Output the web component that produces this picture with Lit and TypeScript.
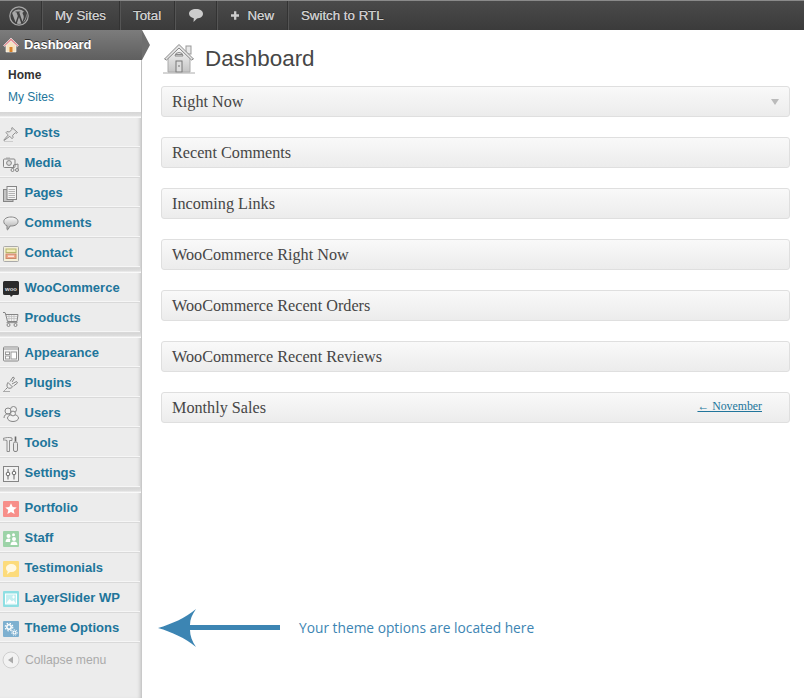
import { LitElement, html, css, svg } from "lit";
import { customElement } from "lit/decorators.js";

const stroke = "#858585";

// sidebar icons, all on a 16x16 box
const icons: Record<string, unknown> = {
  posts: svg`<path d="M9 1.500l5.500 5-1.200.8-1-.6-2.600 2.600.3 2.400-1 1-2.200-2.400L1 14.500l-.3-.3 4.600-5.300-2.400-2.300 1-1 2.500.4 2.600-2.700-.5-1z" fill="#e8e8e8" stroke="${stroke}" stroke-width=".9"/><path d="M1 15.500h9" stroke="#ccc"/>`,
  media: svg`<rect x=".5" y="3" width="11.500" height="8.500" rx="1" fill="#f0f0f0" stroke="${stroke}"/><rect x="3" y="1.500" width="4" height="1.500" fill="#aaa"/><circle cx="6" cy="7" r="2.400" fill="#ddd" stroke="${stroke}"/><path d="M10.500 12.500V9l4.500-1v5.500" fill="none" stroke="${stroke}"/><circle cx="9.500" cy="14" r="1.500" fill="#eee" stroke="${stroke}"/><circle cx="14" cy="14" r="1.500" fill="#eee" stroke="${stroke}"/>`,
  pages: svg`<rect x=".5" y="3.500" width="9.500" height="12" fill="#c4c4c4" stroke="${stroke}"/><rect x="4" y=".5" width="9.500" height="13" fill="#f4f4f4" stroke="${stroke}"/><path d="M5.500 3.500h6.500M5.500 5.500h6.500M5.500 7.500h6.500M5.500 9.500h6.500M5.500 11.500h6.500" stroke="#b4b4b4"/>`,
  comments: svg`<defs><linearGradient id="cb" x1="0" y1="0" x2="0" y2="1"><stop offset="0" stop-color="#fafafa"/><stop offset="1" stop-color="#a8a8a8"/></linearGradient></defs><path d="M8 1c4 0 7 1.800 7 4.500S12 10 8.500 10H7l-2 3.500c-.3.400-1 .3-1-.3V9.700C2 9 .8 7.500.8 5.500.8 2.800 4 1 8 1z" fill="url(#cb)" stroke="${stroke}"/>`,
  contact: svg`<rect x=".5" y=".5" width="15" height="15" rx="1" fill="#f4efd8" stroke="#aaa"/><rect x="3" y="3" width="10" height="3.500" fill="#f3edb8" stroke="#b5b56a"/><rect x="3" y="8" width="10" height="4.500" fill="#f0a58a" stroke="#c98a6a"/><path d="M5 10.200h6" stroke="#fff"/>`,
  products: svg`<path d="M0 1.500h2l.8 2h12.200l-1 7H4.500L2.500 2.500" fill="#f0f0f0" stroke="${stroke}"/><path d="M4 5.500h10M4 7.500h10M6 4v6M8.500 4v6M11 4v6" stroke="#bbb" stroke-width=".7"/><rect x="3.500" y="11" width="11" height="1.200" fill="#999"/><circle cx="5.500" cy="14" r="1.500" fill="#eee" stroke="${stroke}"/><circle cx="12.500" cy="14" r="1.500" fill="#eee" stroke="${stroke}"/>`,
  appearance: svg`<rect x=".5" y="1" width="15" height="14" rx="1" fill="#f4f4f4" stroke="${stroke}"/><rect x="1" y="1.500" width="14" height="2.500" fill="#c4c4c4"/><rect x="2.500" y="6" width="4" height="2.500" fill="#fff" stroke="#999"/><rect x="2.500" y="10" width="4" height="3" fill="#fff" stroke="#999"/><rect x="8" y="6" width="5.500" height="7" fill="#fff" stroke="#999"/>`,
  plugins: svg`<path d="M5 6.500l4.500 4.500c-1.500 1.500-3.500 1.700-5 .5l-1.500 1.500M5 6.500c-1.200 1.700-1.300 3.300-.5 5" fill="#eee" stroke="${stroke}"/><path d="M7 5.500l3-4.500 1.500 1-2.500 4M9 8l4.500-2.500 1 1.500-4 3" fill="#f4f4f4" stroke="${stroke}"/><path d="M3 13l-2.500 2.500M0 15.500h7" stroke="#aaa"/>`,
  users: svg`<circle cx="5" cy="5" r="3" fill="#f0f0f0" stroke="${stroke}"/><circle cx="10.500" cy="3.500" r="3" fill="#f0f0f0" stroke="${stroke}"/><path d="M1 12c0-3 2-4 4-4 1 0 1.500.3 2 .7" fill="#eee" stroke="${stroke}"/><ellipse cx="10" cy="12" rx="5.500" ry="3.500" fill="#f2f2f2" stroke="${stroke}"/><circle cx="10" cy="7.500" r="2.400" fill="#f2f2f2" stroke="${stroke}"/>`,
  tools: svg`<path d="M0 2.500C3 1.500 6 1 9 2v2.500H6.500V15.500h-2.500V4.500C2.500 4 1 3.800 0 4z" fill="#ececec" stroke="${stroke}" stroke-width=".9"/><path d="M12.500.5v5" stroke="#666" stroke-width="1.600"/><rect x="10.500" y="6" width="4" height="9.500" rx="1.500" fill="#e8e8e8" stroke="${stroke}"/>`,
  settings: svg`<rect x=".5" y=".5" width="15" height="15" fill="#f2f2f2" stroke="${stroke}"/><path d="M5 3v3M5 10v3.500M11 3v2M11 9v4.500" stroke="#666"/><circle cx="5" cy="8" r="1.800" fill="#fff" stroke="#666"/><circle cx="11" cy="7" r="1.800" fill="#fff" stroke="#666"/>`,
  portfolio: svg`<rect width="16" height="16" rx="1" fill="#f78f8a"/><path d="M8 2.300l1.700 3.700 4 .4-3 2.700.9 4L8 11.100l-3.600 2 .9-4-3-2.700 4-.4z" fill="#fff"/>`,
  staff: svg`<rect width="16" height="16" rx="1" fill="#9dd3a8"/><circle cx="5.500" cy="5" r="2" fill="#fff"/><circle cx="10.500" cy="3.700" r="1.500" fill="#fff"/><circle cx="11" cy="8" r="2" fill="#fff"/><path d="M2.500 11c0-2.500 1.500-3.500 3-3.500 1 0 1.500.4 2 1-.6 1-.6 2-.3 2.500zM7.500 14c0-2.500 1.500-3.500 3.500-3.500s3.500 1 3.500 3.500z" fill="#fff"/>`,
  testimonials: svg`<rect width="16" height="16" rx="1" fill="#fcdb7c"/><path d="M8.500 3c3 0 5 1.700 5 4s-2 4-5 4H7l-3 2.500.7-3.300C3.300 9.500 3 8.300 3 7c0-2.300 2.500-4 5.500-4z" fill="#fff8e2"/>`,
  layerslider: svg`<rect width="16" height="16" rx="1" fill="#8fdfe3"/><rect x="2.500" y="3" width="11" height="10" fill="#c4eff1" stroke="#fff"/><path d="M3 12.500l3.500-4.500 2.500 2.500 1.500-1.500 2.500 3.500z" fill="#fff"/><path d="M10.500 4.500v3M9 6h3" stroke="#fff"/>`,
  theme: svg`<rect width="16" height="16" rx="1" fill="#7eb0d0"/><circle cx="6" cy="6" r="2.200" fill="none" stroke="#fff" stroke-width="1.500"/><circle cx="6" cy="6" r="3.800" fill="none" stroke="#fff" stroke-width="1.200" stroke-dasharray="1.500 1.500"/><circle cx="11.500" cy="11.500" r="1.500" fill="none" stroke="#fff" stroke-width="1.200"/><circle cx="11.500" cy="11.500" r="2.800" fill="none" stroke="#fff" stroke-width="1" stroke-dasharray="1.200 1.200"/>`,
};

const groups = [
  [["posts", "Posts"], ["media", "Media"], ["pages", "Pages"], ["comments", "Comments"], ["contact", "Contact"]],
  [["woo", "WooCommerce"], ["products", "Products"]],
  [["appearance", "Appearance"], ["plugins", "Plugins"], ["users", "Users"], ["tools", "Tools"], ["settings", "Settings"]],
  [["portfolio", "Portfolio"], ["staff", "Staff"], ["testimonials", "Testimonials"], ["layerslider", "LayerSlider WP"], ["theme", "Theme Options"]],
];

const widgets = [
  "Right Now",
  "Recent Comments",
  "Incoming Links",
  "WooCommerce Right Now",
  "WooCommerce Recent Orders",
  "WooCommerce Recent Reviews",
  "Monthly Sales",
];

@customElement("app-root")
export class AppRoot extends LitElement {
  static styles = css`
    :host {
      display: block;
      width: 804px;
      height: 698px;
      overflow: hidden;
      background: #fff;
      font-family: "Liberation Sans", Arial, sans-serif;
    }
    .topbar {
      display: flex;
      height: 30px;
      box-sizing: border-box;
      border-top: 1px solid #8a8a8a;
      background: linear-gradient(#4a4a4a, #3b3b3b);
      color: #ccc;
      font-size: 13.3px;
      text-shadow: 0 0 0.6px #ccc, 0 -1px 0 #2a2a2a;
    }
    .topbar > div {
      display: flex;
      align-items: center;
      gap: 8px;
      padding: 0 13px;
      border-right: 1px solid #333;
      box-shadow: 1px 0 0 #555;
      white-space: nowrap;
    }
    .topbar > div:last-child {
      border: 0;
      box-shadow: none;
    }
    .topbar .logo {
      width: 42px;
      box-sizing: border-box;
      padding: 0 0 0 9px;
    }
    .topbar .bubble {
      width: 42px;
      box-sizing: border-box;
      padding: 0 0 0 13px;
    }
    .topbar .mysites {
      width: 78px;
      box-sizing: border-box;
    }
    .topbar .total {
      width: 55px;
      box-sizing: border-box;
    }
    .topbar .new {
      width: 71px;
      box-sizing: border-box;
      padding-left: 14px;
    }
    .layout {
      display: flex;
    }
    .sidebar {
      flex: 0 0 142px;
      height: 668px;
      background: #ececec;
      box-shadow: inset -4px 0 4px -3px rgba(0, 0, 0, 0.25);
    }
    .current {
      position: relative;
      display: flex;
      align-items: center;
      gap: 5px;
      height: 30px;
      box-sizing: border-box;
      padding: 0 0 1px 3px;
      background: linear-gradient(#7c7c7c, #5f5f5f);
      color: #fff;
      font-size: 13px;
      font-weight: bold;
      letter-spacing: -0.05px;
      text-shadow: 0 -1px 0 rgba(0, 0, 0, 0.6);
    }
    .current::after {
      content: "";
      position: absolute;
      left: 142px;
      top: 0;
      border-left: 8px solid #6e6e6e;
      border-top: 15px solid transparent;
      border-bottom: 15px solid transparent;
    }
    .sub {
      height: 52px;
      box-sizing: border-box;
      padding: 4px 0 0 8px;
      background: #fff;
      margin-right: 1px;
      font-size: 12px;
      line-height: 22px;
      color: #21759b;
      box-shadow: 0 1px 2px rgba(0, 0, 0, 0.15);
    }
    .sub .here {
      font-weight: bold;
      color: #333;
    }
    .sep {
      height: 5px;
      margin-right: 1px;
      box-sizing: border-box;
      background: linear-gradient(#d6d6d6 0, #dedede 60%, #f4f4f4 80%, #ffffff 100%);
    }
    .sep.top {
      height: 6px;
    }
    .item {
      display: flex;
      align-items: center;
      gap: 5px;
      height: 30px;
      box-sizing: border-box;
      padding: 0 0 0 3px;
      border-bottom: 1px solid #d9d9d9;
      margin-right: 2px;
      box-shadow: inset 0 -1px 0 #f6f6f6;
      color: #21759b;
      font-size: 13px;
      font-weight: bold;
    }
    .item svg {
      flex: none;
      width: 16px;
      height: 16px;
      margin-top: 2px;
    }
    .item > span {
      margin-left: 0.5px;
    }
    .collapse {
      display: flex;
      align-items: center;
      gap: 5px;
      height: 34px;
      padding-left: 2px;
      color: #aaa;
      font-size: 12.2px;
    }
    .main {
      flex: 1;
      padding: 0 14px 0 19px;
    }
    .title {
      display: flex;
      align-items: center;
      gap: 10px;
      height: 56px;
      padding-left: 2px;
      font-size: 22.4px;
      color: #464646;
    }
    .title span {
      padding-top: 2px;
    }
    .widget {
      display: flex;
      align-items: center;
      justify-content: space-between;
      height: 31px;
      box-sizing: border-box;
      margin-bottom: 20px;
      padding: 1px 10px 0;
      border: 1px solid #dfdfdf;
      border-radius: 3px;
      background: linear-gradient(#f9f9f9, #ececec);
      font-family: "Liberation Serif", "DejaVu Serif", serif;
      font-size: 16.2px;
      color: #464646;
    }
    .widget a {
      margin: 0 17px 3px 0;
      font-size: 11.8px;
      color: #21759b;
      text-decoration: underline;
    }
    .widget i {
      border-top: 6px solid #bbb;
      border-left: 4px solid transparent;
      border-right: 4px solid transparent;
    }
    .note {
      display: flex;
      align-items: center;
      gap: 19px;
      margin-top: 186px;
      margin-left: -3px;
      font-family: "Open Sans", sans-serif;
      font-size: 13.75px;
      color: #3c85b3;
    }
    .note span {
      padding-bottom: 2px;
    }
  `;

  private wooIcon() {
    return html`<svg viewBox="0 0 16 16">
      <path d="M1.500 0h13A1.500 1.500 0 0 1 16 1.500v11a1.500 1.500 0 0 1-1.500 1.500H10l-2 2-1-2H1.500A1.500 1.500 0 0 1 0 12.500v-11A1.500 1.500 0 0 1 1.500 0z" fill="#2b2b2b"/>
      <text x="8" y="9.500" text-anchor="middle" font-size="6" font-weight="bold" fill="#ddd" font-family="Liberation Sans">woo</text>
    </svg>`;
  }

  private renderItem(key: string, label: string) {
    return html`<div class="item">
      ${key === "woo" ? this.wooIcon() : html`<svg viewBox="0 0 16 16">${icons[key]}</svg>`}
      <span>${label}</span>
    </div>`;
  }

  render() {
    return html`
      <div class="topbar">
        <div class="logo">
          <svg width="20" height="20" viewBox="0 0 20 20">
            <circle cx="10" cy="10" r="9.200" fill="none" stroke="#a8a8a8" stroke-width="1.200"/>
            <path d="M3.200 7.200l3.400 9.300L8.800 10 7.500 6.300h-1V5.500h4.800v.8h-1.100l3.300 9.500 1-3.300c.5-1.700.2-3-.6-4.300-.6-1-.4-2.200 1.200-2.500A7.900 7.900 0 0 0 3.600 6.300zM10 11l-2.200 6.600a8 8 0 0 0 4.600-.1zM16.800 6.500c.6 2.400.2 4.300-.8 6.800l-2.200 3.400a8 8 0 0 0 3-10.200z" fill="#a8a8a8"/>
          </svg>
        </div>
        <div class="mysites">My Sites</div>
        <div class="total">Total</div>
        <div class="bubble">
          <svg width="16" height="15" viewBox="0 0 16 15">
            <path d="M8 1c4 0 7 2 7 4.800s-3 4.700-6 4.700L5.500 14l.3-3.800C3 9.600 1 8 1 5.800 1 3 4 1 8 1z" fill="#ccc"/>
          </svg>
        </div>
        <div class="new">
          <svg width="11" height="11" viewBox="0 0 11 11"><path d="M4 0h3v4h4v3H7v4H4V7H0V4h4z" fill="#ccc"/></svg>
          <span>New</span>
        </div>
        <div>Switch to RTL</div>
      </div>
      <div class="layout">
        <div class="sidebar">
          <div class="current">
            <svg width="16" height="16" viewBox="0 0 16 16">
              <path d="M3 8.500L8 4l5 4.500V15H3z" fill="#f6e3c0" stroke="#fff" stroke-width=".6"/>
              <path d="M8 1L.5 8.500l1.200 1L8 3.800l6.300 5.700 1.200-1z" fill="#e58a8f" stroke="#fff" stroke-width=".6"/>
              <rect x="6.500" y="10" width="3" height="5" fill="#d9822b"/>
            </svg>
            <span>Dashboard</span>
          </div>
          <div class="sub">
            <div class="here">Home</div>
            <div>My Sites</div>
          </div>
          <div class="sep top"></div>
          ${groups.map(
            (group, i) => html`
              ${group.map(([key, label]) => this.renderItem(key, label))}
              ${i < groups.length - 1 ? html`<div class="sep"></div>` : ""}
            `
          )}
          <div class="collapse">
            <svg width="18" height="18" viewBox="0 0 18 18">
              <circle cx="9" cy="9" r="8" fill="#f2f2f2" stroke="#cfcfcf"/>
              <path d="M11 5.500v7L6 9z" fill="#aaa"/>
            </svg>
            <span>Collapse menu</span>
          </div>
        </div>
        <div class="main">
          <div class="title">
            <svg width="32" height="32" viewBox="0 0 32 32">
              <defs>
                <linearGradient id="wall" x1="0" y1="0" x2="0" y2="1">
                  <stop offset="0" stop-color="#f6f6f6"/>
                  <stop offset="1" stop-color="#c4c4c4"/>
                </linearGradient>
              </defs>
              <rect x="23" y="4" width="5" height="8" fill="#e8e8e8" stroke="#999"/>
              <path d="M5 16L16 6l11 10v14H5z" fill="url(#wall)" stroke="#aaa"/>
              <path d="M1.500 17L16 2.500 30.500 17l-2 1L16 6 3.500 18z" fill="#e6e6e6" stroke="#888"/>
              <path d="M12 14a4 3.500 0 0 1 8 0zM12.500 12.500h7" fill="none" stroke="#888"/>
              <rect x="13" y="19" width="6" height="11" fill="#ddd" stroke="#777"/>
              <circle cx="16" cy="24" r=".8" fill="#666"/>
              <path d="M0 31h32" stroke="#aaa"/>
            </svg>
            <span>Dashboard</span>
          </div>
          ${widgets.map(
            (w, i) => html`<div class="widget">
              <span>${w}</span>
              ${i === 0 ? html`<i></i>` : ""}
              ${w === "Monthly Sales" ? html`<a>← November</a>` : ""}
            </div>`
          )}
          <div class="note">
            <svg width="122" height="38" viewBox="0 0 122 38">
              <path d="M0 19C14 15 27 9 38 0c-4 6-6 10-6 16h90v5H32c0 6 2 11 6 17C27 29 14 23 0 19z" fill="#3c85b3"/>
            </svg>
            <span>Your theme options are located here</span>
          </div>
        </div>
      </div>
    `;
  }
}
